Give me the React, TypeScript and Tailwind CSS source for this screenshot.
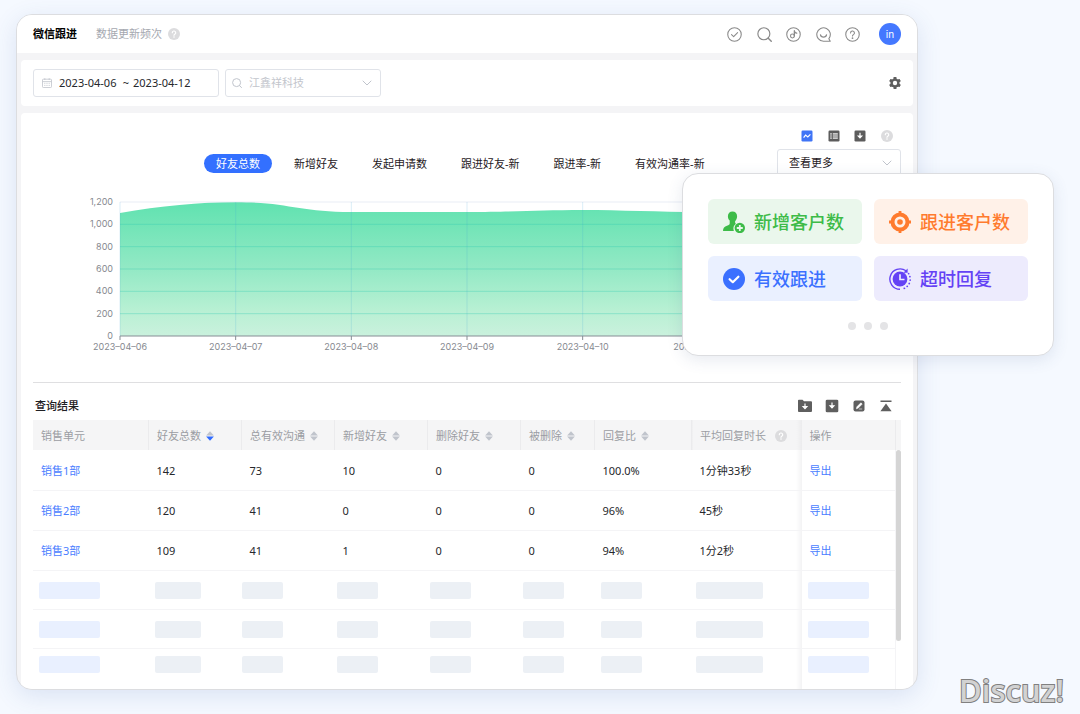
import type { ReactNode } from "react";

interface Metric {
  label: string;
  tone: string;
  icon: ReactNode;
}

interface Column {
  label: string;
  width: string;
  skeleton: string;
  sort?: "none" | "desc";
  help?: boolean;
}

interface Row {
  unit: string;
  values: string[];
}

const TABS = ["好友总数", "新增好友", "发起申请数", "跟进好友-新", "跟进率-新", "有效沟通率-新"];

const Y_TICKS = ["1,200", "1,000", "800", "600", "400", "200", "0"];

const DATES = [
  "2023–04–06",
  "2023–04–07",
  "2023–04–08",
  "2023–04–09",
  "2023–04–10",
  "2023–04–11",
  "2023–04–12",
];

const COLUMNS: Column[] = [
  { label: "销售单元", width: "", skeleton: "ml-1.5 w-[61px] bg-[#e9f0ff]" },
  { label: "好友总数", width: "w-[93px]", skeleton: "ml-1.5 w-[46px] bg-[#ecf0f5]", sort: "desc" },
  { label: "总有效沟通", width: "w-[93px]", skeleton: "w-[41px] bg-[#ecf0f5]", sort: "none" },
  { label: "新增好友", width: "w-[93px]", skeleton: "ml-0.5 w-[41px] bg-[#ecf0f5]", sort: "none" },
  { label: "删除好友", width: "w-[93px]", skeleton: "ml-0.5 w-[41px] bg-[#ecf0f5]", sort: "none" },
  { label: "被删除", width: "w-[74px]", skeleton: "ml-0.5 w-[41px] bg-[#ecf0f5]", sort: "none" },
  { label: "回复比", width: "w-[97px]", skeleton: "ml-1.5 w-[41px] bg-[#ecf0f5]", sort: "none" },
  { label: "平均回复时长", width: "w-[110px]", skeleton: "ml-1 w-[67px] bg-[#ecf0f5]", help: true },
  { label: "操作", width: "w-[94px]", skeleton: "ml-1.5 w-[61px] bg-[#e9f0ff]" },
];

const ROWS: Row[] = [
  { unit: "销售1部", values: ["142", "73", "10", "0", "0", "100.0%", "1分钟33秒"] },
  { unit: "销售2部", values: ["120", "41", "0", "0", "0", "96%", "45秒"] },
  { unit: "销售3部", values: ["109", "41", "1", "0", "0", "94%", "1分2秒"] },
];

/* 灰色问号提示 */
function HelpDot() {
  return (
    <svg className="h-3 w-3 shrink-0" viewBox="0 0 12 12" aria-hidden="true">
      <circle cx="6" cy="6" r="6" fill="#dcdcde" />
      <path
        d="M4.3 4.7a1.7 1.7 0 1 1 2.5 1.5c-.5.3-.8.5-.8 1.1"
        fill="none"
        stroke="#fff"
        strokeWidth="1.2"
        strokeLinecap="round"
      />
      <circle cx="6" cy="9" r=".8" fill="#fff" />
    </svg>
  );
}

function ChevronDown() {
  return (
    <svg className="h-2 w-2.5 shrink-0" viewBox="0 0 10 8" fill="none" stroke="#c0c4cc" aria-hidden="true">
      <path d="M1 2l4 4 4-4" strokeLinecap="round" strokeLinejoin="round" />
    </svg>
  );
}

function SortIcon({ active }: { active: boolean }) {
  return (
    <svg className="h-2.5 w-2 shrink-0" viewBox="0 0 8 10" aria-hidden="true">
      <path d="M4 .3L7.900 4.400H.1z" fill="#c0c4cc" />
      <path d="M4 9.700L.1 5.600h7.800z" fill={active ? "#2f6bff" : "#c0c4cc"} />
    </svg>
  );
}

/* 顶部栏 */
function TopBar() {
  const iconProps = {
    className: "h-[15px] w-[15px]",
    viewBox: "0 0 14 14",
    fill: "none",
    stroke: "#8a8a8a",
    strokeLinecap: "round" as const,
    strokeLinejoin: "round" as const,
    "aria-hidden": true,
  };
  return (
    <header className="flex h-[38px] items-center justify-between bg-white px-4">
      <div className="flex items-center">
        <h1 className="text-[11px] leading-4 font-bold text-black">微信跟进</h1>
        <span className="ml-[19px] text-[11px] leading-4 text-[#a5a8b0]">数据更新频次</span>
        <button type="button" aria-label="更新说明" className="ml-1.5">
          <HelpDot />
        </button>
      </div>
      <div className="flex items-center gap-[19px]">
        <nav className="flex w-[133px] items-center justify-between">
          <button type="button" aria-label="待办">
            <svg {...iconProps}>
              <circle cx="7" cy="7" r="6.3" />
              <path d="M4.2 7.1l2 1.9 3.700-3.700" />
            </svg>
          </button>
          <button type="button" aria-label="搜索">
            <svg {...iconProps}>
              <circle cx="6.4" cy="6.3" r="5.6" strokeWidth="1.1" />
              <path d="M10.5 10.4l2.8 2.8" strokeWidth="1.3" />
            </svg>
          </button>
          <button type="button" aria-label="抖音">
            <svg {...iconProps}>
              <circle cx="7" cy="7" r="6.3" />
              <circle cx="6" cy="8.4" r="1.8" />
              <path d="M7.8 8.4V3.500c.1 1.300 1 2.100 2.200 2.200" strokeWidth="1.2" />
            </svg>
          </button>
          <button type="button" aria-label="消息">
            <svg {...iconProps}>
              <path d="M13.3 13.3H7A6.3 6.3 0 1 1 12 10.9l1.3 2.4z" />
              <path d="M4.2 7.4c.5 2.7 5.1 2.7 5.6 0" strokeWidth="1.2" />
            </svg>
          </button>
          <button type="button" aria-label="帮助">
            <svg {...iconProps}>
              <circle cx="7" cy="7" r="6.3" />
              <path d="M5.2 5.6A1.8 1.8 0 1 1 7.9 7.1c-.6.4-.9.6-.9 1.3" />
              <circle cx="7" cy="10.4" r=".3" />
            </svg>
          </button>
        </nav>
        <button
          type="button"
          className="h-[22px] w-[22px] rounded-full bg-[#4478ff] font-['Inter',sans-serif] text-[10px] leading-[22px] text-white"
        >
          in
        </button>
      </div>
    </header>
  );
}

/* 筛选条件 */
function FilterBar() {
  return (
    <section className="flex h-[46px] items-center justify-between rounded bg-white px-3">
      <div className="flex gap-1.5">
        <div className="flex h-7 w-[186px] items-center rounded-[3px] border border-[#e0e3e9] pl-2">
          <svg className="h-2.5 w-2.5" viewBox="0 0 10 10" fill="none" stroke="#c0c4cc" strokeWidth=".8" aria-hidden="true">
            <rect x=".5" y="1.2" width="9" height="8.3" rx=".8" />
            <path d="M.5 3.6h9M2.8.2v1.8M7.2.2v1.8M2.2 5.3h1.2M4.4 5.3h1.2M6.6 5.3h1.2M2.2 7.4h1.2M4.4 7.4h1.2M6.6 7.4h1.2" />
          </svg>
          <input
            aria-label="开始日期"
            defaultValue="2023-04-06"
            className="ml-[7px] w-[60px] text-[11px] leading-4 text-[#26282c] outline-none"
          />
          <span className="w-[14px] text-center text-[11px] leading-4 text-[#26282c]">~</span>
          <input
            aria-label="结束日期"
            defaultValue="2023-04-12"
            className="w-[60px] text-[11px] leading-4 text-[#26282c] outline-none"
          />
        </div>
        <div className="flex h-7 w-[156px] items-center rounded-[3px] border border-[#e0e3e9] pr-2 pl-1.5">
          <svg className="h-2.5 w-2.5 shrink-0" viewBox="0 0 10 10" fill="none" stroke="#c0c4cc" aria-hidden="true">
            <circle cx="4.6" cy="4.6" r="4" />
            <path d="M7.6 7.6l1.9 2" strokeLinecap="round" />
          </svg>
          <input
            aria-label="企业"
            placeholder="江鑫祥科技"
            className="ml-[7px] min-w-0 flex-1 text-[11px] leading-4 outline-none placeholder:text-[#c3c6cd]"
          />
          <ChevronDown />
        </div>
      </div>
      <button type="button" aria-label="设置">
        <svg className="h-3 w-3" viewBox="0 0 12 12" aria-hidden="true">
          <g fill="#5f5f5f">
            <rect x="4.5" y="0" width="3" height="12" rx=".6" />
            <rect x="4.5" y="0" width="3" height="12" rx=".6" transform="rotate(60 6 6)" />
            <rect x="4.5" y="0" width="3" height="12" rx=".6" transform="rotate(120 6 6)" />
            <circle cx="6" cy="6" r="4.6" />
          </g>
          <circle cx="6" cy="6" r="2.2" fill="#fff" />
        </svg>
      </button>
    </section>
  );
}

/* 趋势图 */
function TrendChart() {
  return (
    <svg className="h-40 w-full overflow-visible" role="img" aria-label="好友总数趋势">
      <defs>
        <linearGradient id="area" x1="0" y1="0" x2="0" y2="1">
          <stop offset="0" stopColor="#60e2b0" />
          <stop offset="0.5" stopColor="#93e9c5" />
          <stop offset="0.8" stopColor="#b7f0d3" />
          <stop offset="1" stopColor="#caf1dd" />
        </linearGradient>
      </defs>
      <svg x="0" y="0" width="100%" height="134" viewBox="0 0 694 134" preserveAspectRatio="none">
        <path
          d="M0 11C40 4 80 0 116 0C166 0 180 10 231 10H347C400 10 420 8 463 8C500 8 540 10 578 10H694V134H0z"
          fill="url(#area)"
        />
      </svg>
      {Y_TICKS.map((tick, i) => {
        const y = (i * 134) / 6;
        const last = i === Y_TICKS.length - 1;
        return (
          <g key={tick}>
            <line
              x1="0"
              x2="100%"
              y1={y}
              y2={y}
              stroke={last ? "#868d94" : i === 0 ? "#dfe6f1" : "#2cc8b0"}
              strokeOpacity={last ? 1 : i === 0 ? 0.7 : 0.32}
            />
            <text x="-7" y={y + 3} textAnchor="end" fill="#86898f" fontSize="9" fontFamily="Inter, sans-serif">
              {tick}
            </text>
          </g>
        );
      })}
      {DATES.map((date, i) => {
        const x = `${(i * 100) / 6}%`;
        return (
          <g key={date}>
            <line x1={x} x2={x} y1="0" y2="134" stroke="#3aa0d0" strokeOpacity=".18" />
            <line x1={x} x2={x} y1="134" y2="138" stroke="#868d94" />
            <text x={x} y="148" textAnchor="middle" fill="#86898f" fontSize="9" fontFamily="Inter, sans-serif">
              {date}
            </text>
          </g>
        );
      })}
    </svg>
  );
}

function ChartSection() {
  return (
    <section>
      <div className="flex justify-end pt-[17px] pr-2">
        <div className="flex w-[92px] items-center justify-between">
          <button type="button" aria-label="折线图">
            <svg className="h-3 w-3" viewBox="0 0 12 12" aria-hidden="true">
              <rect x=".5" y=".5" width="11" height="11" rx="1.2" fill="#3f74f6" />
              <path d="M2.6 7.6l2-2.5 2.2 1.8 2.6-2.6" fill="none" stroke="#fff" strokeWidth="1.2" />
            </svg>
          </button>
          <button type="button" aria-label="表格">
            <svg className="h-3 w-3" viewBox="0 0 12 12" aria-hidden="true">
              <rect x=".5" y=".5" width="11" height="11" rx="1.2" fill="#5c5c5c" />
              <path d="M2.2 3h1.6v6H2.2zM4.8 3h5v6h-5z" fill="#c9c9c9" />
              <path d="M2.2 5h7.6M2.2 7h7.6" stroke="#5c5c5c" strokeWidth=".5" />
            </svg>
          </button>
          <button type="button" aria-label="下载图表">
            <svg className="h-3 w-3" viewBox="0 0 12 12" aria-hidden="true">
              <rect x=".5" y=".5" width="11" height="11" rx="1.2" fill="#5c5c5c" />
              <path d="M6 2.8v3.600M4.300 6L6 7.900 7.700 6z" fill="#fff" stroke="#fff" strokeWidth="1.2" />
            </svg>
          </button>
          <button type="button" aria-label="图表说明">
            <HelpDot />
          </button>
        </div>
      </div>

      <div className="mt-[7px] flex items-center justify-between">
        <div className="flex gap-2.5 pl-[171px] whitespace-nowrap">
          {TABS.map((tab, i) => (
            <button
              key={tab}
              type="button"
              className={`rounded-full px-3 py-0.5 text-[11px] leading-[15px] ${
                i === 0 ? "bg-[#3370ff] text-white" : "text-[#1f2024]"
              }`}
            >
              {tab}
            </button>
          ))}
        </div>
        <div className="flex h-7 w-[124px] items-center rounded-[3px] border border-[#e0e3e9] pr-2 pl-[11px]">
          <select aria-label="更多指标" className="flex-1 appearance-none text-[11px] leading-4 text-[#1f2024] outline-none">
            <option>查看更多</option>
          </select>
          <ChevronDown />
        </div>
      </div>

      <div className="mt-[25px] px-[87px]">
        <TrendChart />
      </div>
    </section>
  );
}

/* 查询结果表格 */
function ResultSection() {
  return (
    <section className="mt-5 border-t border-[#dfdfe1]">
      <div className="flex h-[37px] items-center justify-between pt-2 pr-2 pl-0.5">
        <h2 className="text-[11px] leading-4 font-medium text-[#1f2024]">查询结果</h2>
        <div className="flex items-center gap-[13px]">
          <button type="button" aria-label="导出到文件夹">
            <svg className="h-3.5 w-3.5" viewBox="0 0 14 14" aria-hidden="true">
              <path d="M0 1.6c0-.6.3-.9.9-.9h3.6L6 2.3h7c.7 0 1 .3 1 .9v8.9c0 .6-.3.9-1 .9H.9c-.6 0-.9-.3-.9-.9z" fill="#5f5f5f" />
              <path d="M7 4.600v3.500M5.100 7.600L7 9.700l1.900-2.100z" fill="#fff" stroke="#fff" strokeWidth="1.200" />
            </svg>
          </button>
          <button type="button" aria-label="下载">
            <svg className="h-3.5 w-3.5" viewBox="0 0 14 14" aria-hidden="true">
              <rect x=".7" y=".7" width="12.6" height="12.6" rx="1.4" fill="#5f5f5f" />
              <path d="M7 3.500v3.500M5.100 6.800L7 8.900l1.900-2.100z" fill="#fff" stroke="#fff" strokeWidth="1.200" />
            </svg>
          </button>
          <button type="button" aria-label="编辑">
            <svg className="h-3.5 w-3.5" viewBox="0 0 14 14" aria-hidden="true">
              <rect x="1.5" y="1.5" width="11" height="11" rx="2" fill="#5f5f5f" />
              <path d="M4.4 9.8l.5-2 4-4 1.3 1.3-4 4zM6.8 10h3.4" fill="#fff" stroke="#fff" strokeWidth=".6" />
            </svg>
          </button>
          <button type="button" aria-label="收起">
            <svg className="h-3.5 w-3.5" viewBox="0 0 14 14" aria-hidden="true">
              <path d="M1.5 1.6h11v1.5h-11zM7 4.6l5.6 7.6H1.4z" fill="#5f5f5f" />
            </svg>
          </button>
        </div>
      </div>

      <div className="flex">
        <table className="min-w-0 flex-1 table-fixed border-collapse text-left text-[11px] leading-4">
          <thead>
            <tr className="h-[30px] bg-[#f5f5f6]">
              {COLUMNS.map((col, i) => (
                <th
                  key={col.label}
                  scope="col"
                  className={`px-2 pt-0.5 font-normal whitespace-nowrap text-[#9b9da3] ${col.width} ${
                    i === 7
                      ? "bg-[linear-gradient(to_left,#ebebec,transparent_6px)]"
                      : "border-r border-[#ebebed]"
                  }`}
                >
                  <span className="flex items-center gap-[5px]">
                    {col.label}
                    {col.sort && <SortIcon active={col.sort === "desc"} />}
                    {col.help && (
                      <span className="ml-1">
                        <HelpDot />
                      </span>
                    )}
                  </span>
                </th>
              ))}
            </tr>
          </thead>
          <tbody className="text-[#26282c]">
            {ROWS.map((row) => (
              <tr key={row.unit} className="h-10 border-b border-[#f4f4f6]">
                <td className="px-2 pt-0.5">
                  <a href="#unit" className="text-[#4a7dff]">
                    {row.unit}
                  </a>
                </td>
                {row.values.map((value, i) => (
                  <td
                    key={COLUMNS[i + 1].label}
                    className={`px-2 pt-0.5 ${i === 6 ? "bg-[linear-gradient(to_left,#f3f3f4,transparent_6px)]" : ""}`}
                  >
                    {value}
                  </td>
                ))}
                <td className="border-r border-[#f4f4f6] px-2 pt-0.5">
                  <a href="#export" className="text-[#4a7dff]">
                    导出
                  </a>
                </td>
              </tr>
            ))}
            {/* 加载占位 */}
            {[0, 1, 2].map((n) => (
              <tr key={n} className="h-[39px] border-b border-[#f4f4f6] last:h-[41px] last:border-b-0">
                {COLUMNS.map((col, i) => (
                  <td
                    key={col.label}
                    className={`${n === 2 ? "pt-[7px] align-top" : "pt-0.5"} ${
                      i === 7 ? "bg-[linear-gradient(to_left,#f3f3f4,transparent_6px)]" : ""
                    } ${i === 8 ? "border-r border-[#f4f4f6]" : ""}`}
                  >
                    <div className={`h-[17px] rounded-[2px] ${col.skeleton}`} />
                  </td>
                ))}
              </tr>
            ))}
          </tbody>
        </table>
        <div className="w-[5px] shrink-0">
          <div className="h-[30px] bg-[#f5f5f6]" />
          <div className="h-[191px] rounded-full bg-[#d5d5d5]" />
        </div>
      </div>
    </section>
  );
}

const METRICS: Metric[] = [
  {
    label: "新增客户数",
    tone: "bg-[#eaf7ec] text-[#3dbb48]",
    icon: (
      <>
        <path
          d="M9.5.5c2.7 0 4.6 1.9 4.6 4.8 0 2-.8 3.8-2 5v1.2c0 .6.3 1 .9 1.3-1.6 1-2.6 2.7-2.6 4.7 0 .9.2 1.7.5 2.5H0c0-3 1.5-4.3 4-5.2 1.8-.7 2.7-1.2 2.7-2.3V9.5C5.5 8.500 4.900 7.100 4.900 5.300 4.900 2.400 6.800.5 9.500.5z"
          fill="currentColor"
        />
        <circle cx="16.8" cy="17" r="5.2" fill="currentColor" />
        <path d="M16.8 14v6M13.8 17h6" stroke="#eaf7ec" strokeWidth="1.8" />
      </>
    ),
  },
  {
    label: "跟进客户数",
    tone: "bg-[#fff1e8] text-[#ff7b2e]",
    icon: (
      <>
        <circle cx="11" cy="11" r="7.5" fill="none" stroke="currentColor" strokeWidth="4" />
        <circle cx="11" cy="11" r="2.8" fill="currentColor" />
        <path d="M11 0v4M11 18v4M0 11h4M18 11h4" stroke="currentColor" strokeWidth="2.8" />
      </>
    ),
  },
  {
    label: "有效跟进",
    tone: "bg-[#eaf0ff] text-[#3b70ff]",
    icon: (
      <>
        <circle cx="11" cy="11" r="11" fill="currentColor" />
        <path
          d="M6.6 11.2l3.2 3 5.6-5.5"
          fill="none"
          stroke="#fff"
          strokeWidth="2.2"
          strokeLinecap="round"
          strokeLinejoin="round"
        />
      </>
    ),
  },
  {
    label: "超时回复",
    tone: "bg-[#edebfd] text-[#6442f5]",
    icon: (
      <>
        <circle cx="11" cy="11" r="7.4" fill="currentColor" />
        <path d="M11 6.3v5.2h4.5" fill="none" stroke="#edebfd" strokeWidth="1.7" />
        <path d="M11 21.3A10.2 10.2 0 1 1 17 2.8" fill="none" stroke="currentColor" strokeWidth="1.4" />
        <path d="M18.6.6v4.2h-4.2z" fill="currentColor" />
        <path
          d="M19.6 5.6A10.2 10.2 0 0 1 12.5 21.2"
          fill="none"
          stroke="currentColor"
          strokeWidth="1.7"
          strokeLinecap="round"
          strokeDasharray=".1 3.3"
        />
      </>
    ),
  },
];

/* 悬浮指标卡片 */
function MetricPopover() {
  return (
    <aside className="absolute top-[173px] right-[26px] w-[372px] rounded-[16px] border border-[#dcdde0] bg-white px-[25px] pt-[25px] pb-[25px] shadow-[0_4px_16px_rgba(60,80,130,0.12)]">
      <div className="grid grid-cols-2 gap-3">
        {METRICS.map((metric) => (
          <button
            key={metric.label}
            type="button"
            className={`flex h-[45px] items-center gap-[9px] rounded-md pl-[15px] text-[18px] leading-6 font-medium whitespace-nowrap ${metric.tone}`}
          >
            <svg className="h-[22px] w-[22px] shrink-0" viewBox="0 0 22 22" aria-hidden="true">
              {metric.icon}
            </svg>
            {metric.label}
          </button>
        ))}
      </div>
      <div className="mt-[21px] flex justify-center gap-2">
        {[0, 1, 2].map((n) => (
          <span key={n} className="h-2 w-2 rounded-full bg-[#e4e4e6]" />
        ))}
      </div>
    </aside>
  );
}

export default function App() {
  return (
    <div className="relative min-h-screen overflow-hidden bg-[#f5f9ff] pt-3.5 pr-[162px] pb-6 pl-4 font-['Noto_Sans','Noto_Sans_CJK_SC',sans-serif]">
      <main className="overflow-hidden rounded-[16px] border border-[#dcdde0] bg-[#f4f4f6] shadow-[0_6px_24px_rgba(60,90,170,0.14)]">
        <TopBar />
        <div className="flex flex-col gap-[7px] px-1 pt-[7px]">
          <FilterBar />
          <div className="rounded-t bg-white px-3">
            <ChartSection />
            <ResultSection />
          </div>
        </div>
      </main>
      <MetricPopover />
      <p className="absolute right-4 bottom-1 font-['Open_Sans',sans-serif] text-[31px] leading-10 font-semibold text-[#d2d2d2] [-webkit-text-stroke:2px_#808080] [paint-order:stroke_fill]">
        Discuz!
      </p>
    </div>
  );
}
